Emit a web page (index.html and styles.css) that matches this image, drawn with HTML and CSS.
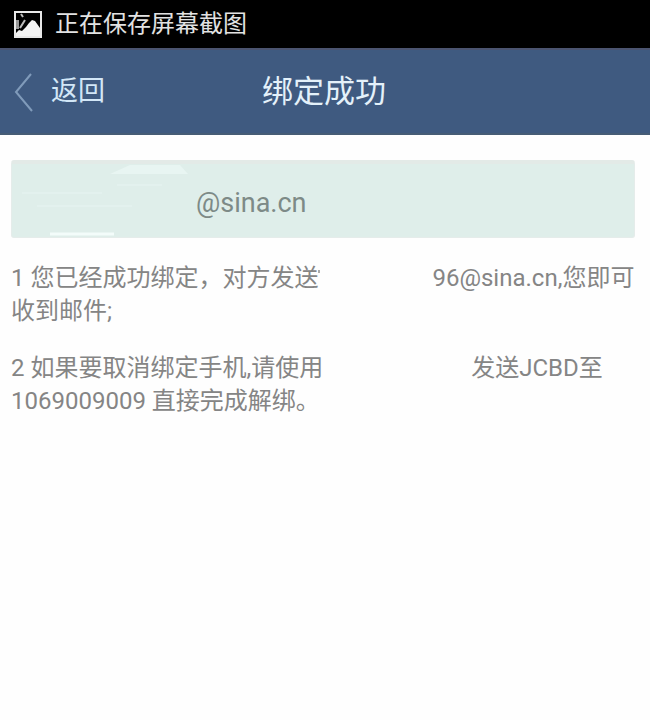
FILE: index.html
```html
<!DOCTYPE html>
<html lang="zh-CN">
<head>
<meta charset="utf-8">
<meta name="viewport" content="width=device-width, initial-scale=1">
<title>绑定成功</title>
<link rel="stylesheet" href="styles.css">
</head>
<body>
<div class="status">
  <svg class="status-icon" viewBox="0 0 28 27" aria-hidden="true">
    <rect x="1" y="1" width="26" height="25" fill="#000" stroke="#e8e8e8" stroke-width="2"/>
    <path d="M2 25V22L5 19L8 20L12 16L15 12L18 9L21 10L26 17V25Z" fill="#f4f4f4"/>
    <path d="M2 9H5V18H2Z" fill="#999"/>
    <path d="M7 3L9 6M11 9L6 17" fill="none" stroke="#bbb" stroke-width="2"/>
  </svg>
  <span>正在保存屏幕截图</span>
</div>
<header class="bar">
  <a class="back" href="#">
    <svg class="chevron" viewBox="0 0 20 40" aria-hidden="true"><path d="M17 2L2 20L18 39" fill="none" stroke="#809bba" stroke-width="2"/></svg>
    <span>返回</span>
  </a>
  <h1 class="title">绑定成功</h1>
</header>
<main class="content">
  <div class="account">
    <svg class="streaks" viewBox="0 0 330 78" aria-hidden="true">
      <path d="M98 14L118 5H168L176 14Z" fill="#e8f5f2"/>
      <path d="M10 33H90M25 46H120M105 25H150" stroke="#e3f1ee" stroke-width="2"/>
      <path d="M38 74H102" stroke="#f3fcfa" stroke-width="3"/>
    </svg>
    <span>@sina.cn</span>
  </div>
  <p>1 您已经成功绑定，对方发送<span class="hidden-address"><i class="speck"></i></span>96@sina.cn,您即可收到邮件;</p>
  <p>2 如果要取消绑定手机,请使用<span class="hidden-number"></span>发送JCBD至1069009009 直接完成解绑。</p>
</main>
</body>
</html>
```
FILE: styles.css
```css
* {
  box-sizing: border-box;
}

body {
  margin: 0;
  min-height: 100vh;
  background: #fefefe;
  color: #858585;
  font-family: Roboto, "Noto Sans CJK SC", sans-serif;
  font-size: 24px;
  line-height: 33px;
}

.status {
  display: flex;
  align-items: center;
  gap: 13px;
  height: 48px;
  padding: 0 14px;
  background: #000;
  color: #e2e2e2;
}

.status-icon {
  width: 28px;
  height: 27px;
}

.bar {
  display: grid;
  grid-template-columns: 1fr auto 1fr;
  align-items: center;
  height: 87px;
  padding: 0 16px 0 14px;
  border-top: 2px solid #4b5470;
  border-bottom: 2px solid #465c75;
  background: #3f5a80;
  color: #e4f1fa;
}

.back {
  display: flex;
  align-items: center;
  gap: 17px;
  color: #d3e7f7;
  font-size: 27px;
  text-decoration: none;
}

.chevron {
  width: 20px;
  height: 40px;
}

.title {
  margin: 0;
  font-size: 31px;
  font-weight: 400;
}

.content {
  padding: 25px 11px;
}

.account {
  position: relative;
  display: flex;
  align-items: center;
  height: 78px;
  margin-right: 4px;
  padding: 6px 184px 0;
  border: 1px solid #e5ecea;
  border-top: 4px solid #e3eae7;
  border-radius: 3px;
  background: #dfeeea;
  color: #7d8a87;
  font-size: 27px;
}

.streaks {
  position: absolute;
  top: -4px;
  left: 0;
  width: 330px;
  height: 78px;
}

.account span {
  position: relative;
}

p {
  margin: 24px 0;
}

.hidden-address,
.hidden-number {
  display: inline-block;
}

.hidden-address {
  width: 114px;
  height: 16px;
}

.hidden-number {
  width: 148px;
}

.speck {
  display: block;
  width: 2px;
  height: 3px;
  background: #aaa;
}
```
